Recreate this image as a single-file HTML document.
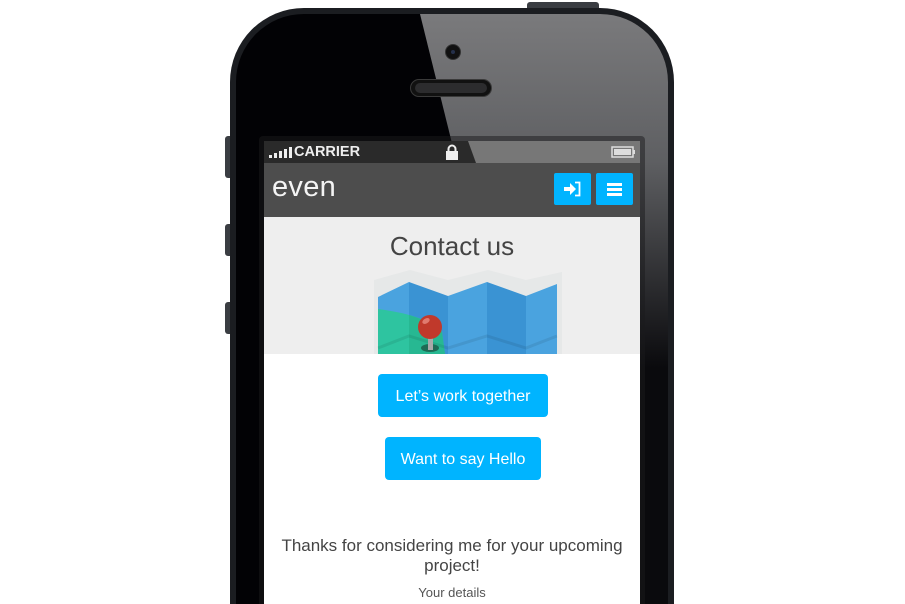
<!DOCTYPE html>
<html><head><meta charset="utf-8"><style>
html,body{margin:0;padding:0;width:905px;height:604px;overflow:hidden;background:#fff;font-family:"Liberation Sans",sans-serif}
#wrap{position:relative;width:905px;height:604px;overflow:hidden}
.abs{position:absolute}
</style></head><body><div id="wrap">
<div class="abs" style="left:225px;top:136px;width:8px;height:42px;background:#3a3d42;border-radius:3px 0 0 3px"></div>
<div class="abs" style="left:225px;top:224px;width:8px;height:32px;background:#3a3d42;border-radius:3px 0 0 3px"></div>
<div class="abs" style="left:225px;top:302px;width:8px;height:32px;background:#3a3d42;border-radius:3px 0 0 3px"></div>
<div class="abs" style="left:527px;top:2px;width:72px;height:10px;background:#3a3d42;border-radius:3px 3px 0 0"></div>
<div class="abs" style="left:230px;top:8px;width:444px;height:596px;background:#1b1d21;border-radius:74px 74px 0 0"></div>
<div class="abs" style="left:236px;top:14px;width:432px;height:590px;background:#020205;border-radius:68px 68px 0 0;overflow:hidden">
  <svg width="432" height="590" style="position:absolute;left:0;top:0">
    <defs><linearGradient id="g" x1="0" y1="0" x2="0" y2="1"><stop offset="0" stop-color="#7a7a7c"/><stop offset="0.25" stop-color="#5e5f62"/><stop offset="0.6" stop-color="#0a0a0d"/></linearGradient></defs>
    <polygon points="184,0 432,0 432,590 330,590" fill="url(#g)"/>
  </svg>
</div>
<div class="abs" style="left:445px;top:44px;width:16px;height:16px;border-radius:50%;background:#111;border:1px solid #333;box-sizing:border-box"></div>
<div class="abs" style="left:451px;top:50px;width:4px;height:4px;border-radius:50%;background:#25304a"></div>
<div class="abs" style="left:410px;top:79px;width:82px;height:18px;border-radius:9px;background:#111;border:1px solid #3a3a3a;box-sizing:border-box"></div>
<div class="abs" style="left:415px;top:83px;width:72px;height:10px;border-radius:5px;background:#2c2c2e"></div>
<div class="abs" style="left:259px;top:136px;width:386px;height:468px;background:#1a1a1c;border-radius:4px 4px 0 0;opacity:.5"></div>
<div class="abs" style="left:264px;top:141px;width:376px;height:22px;background:#2a2a2a;overflow:hidden">
  <div class="abs" style="left:204px;top:0;width:200px;height:22px;background:#777;transform:skewX(20deg);transform-origin:0 0"></div>
  <svg class="abs" style="left:4px;top:5px" width="26" height="12"><rect x="1" y="9" width="3" height="3" fill="#eee"/><rect x="6" y="7" width="3" height="5" fill="#eee"/><rect x="11" y="5" width="3" height="7" fill="#eee"/><rect x="16" y="3" width="3" height="9" fill="#eee"/><rect x="21" y="1" width="3" height="11" fill="#eee"/></svg>
  <div class="abs" style="left:30px;top:3px;color:#eee;font-weight:bold;font-size:14.5px">CARRIER</div>
  <svg class="abs" style="left:181px;top:3px" width="14" height="16"><path d="M3.5 7V5a3.5 3.5 0 0 1 7 0v2" fill="none" stroke="#eee" stroke-width="2"/><rect x="1" y="7" width="12" height="9" fill="#eee"/></svg>
  <svg class="abs" style="left:347px;top:5px" width="26" height="12"><rect x="1" y="1" width="21" height="10" fill="none" stroke="#ddd" stroke-width="1.5"/><rect x="3" y="3" width="17" height="6" fill="#ddd"/><rect x="22" y="4" width="2" height="4" fill="#ddd"/></svg>
</div>
<div class="abs" style="left:264px;top:163px;width:376px;height:54px;background:#4d4d4d">
  <div class="abs" style="left:8px;top:8px;color:#f4f4f4;font-size:29px;letter-spacing:0.3px">even</div>
  <div class="abs" style="left:290px;top:10px;width:37px;height:32px;background:#00b4ff;border-radius:2px"></div>
  <svg class="abs" style="left:299px;top:18px" width="20" height="16"><path d="M1 6h6V2l6 6-6 6v-4H1z" fill="#fff"/><path d="M12 1.5h4.5v13H12" fill="none" stroke="#fff" stroke-width="1.8"/></svg>
  <div class="abs" style="left:332px;top:10px;width:37px;height:32px;background:#00b4ff;border-radius:2px"></div>
  <div class="abs" style="left:343px;top:20px;width:15px;height:2.5px;background:#fff"></div>
  <div class="abs" style="left:343px;top:25px;width:15px;height:2.5px;background:#fff"></div>
  <div class="abs" style="left:343px;top:30px;width:15px;height:2.5px;background:#fff"></div>
</div>
<div class="abs" style="left:264px;top:217px;width:376px;height:137px;background:#eeeeee">
  <div class="abs" style="left:0;top:14px;width:376px;text-align:center;color:#444;font-size:26px">Contact us</div>
</div>
<svg class="abs" style="left:370px;top:270px" width="195" height="84">
  <polygon points="4,10 40,0 78,10 118,0 156,10 192,2 192,84 4,84" fill="#e6e8e8"/>
  <polygon points="8,27 39,12 39,84 8,84" fill="#4aa3df"/>
  <polygon points="39,12 78,26 78,84 39,84" fill="#3a93d3"/>
  <polygon points="78,26 117,12 117,84 78,84" fill="#4aa3df"/>
  <polygon points="117,12 156,26 156,84 117,84" fill="#3a93d3"/>
  <polygon points="156,26 187,14 187,84 156,84" fill="#4aa3df"/>
  <path d="M8,39 C30,42 60,48 72,62 L75,84 L8,84Z" fill="#2ec4a0"/>
  <path d="M39,45 C55,50 68,55 72,62 L75,84 L39,84Z" fill="#27b892"/>
  <polyline points="8,78 39,66 78,78 117,66 156,78 187,66" fill="none" stroke="#000" stroke-opacity=".08" stroke-width="3"/>
  <ellipse cx="60" cy="78" rx="9" ry="4" fill="#1e6b55"/>
  <rect x="58" y="60" width="5" height="20" fill="#a9a9a9"/>
  <circle cx="60" cy="57" r="12" fill="#c0392b"/>
  <ellipse cx="56" cy="51" rx="4" ry="2.5" fill="#e07a6f" transform="rotate(-30 56 51)"/>
</svg>
<div class="abs" style="left:264px;top:354px;width:376px;height:250px;background:#fff"></div>
<div class="abs" style="left:378px;top:374px;width:170px;height:43px;background:#00b4ff;border-radius:4px;color:#fff;font-size:16px;line-height:45px;text-align:center">Let’s work together</div>
<div class="abs" style="left:385px;top:437px;width:156px;height:43px;background:#00b4ff;border-radius:4px;color:#fff;font-size:16px;line-height:45px;text-align:center">Want to say Hello</div>
<div class="abs" style="left:264px;top:536px;width:376px;text-align:center;color:#444;font-size:17px;line-height:20px">Thanks for considering me for your upcoming<br>project!</div>
<div class="abs" style="left:264px;top:585px;width:376px;text-align:center;color:#555;font-size:13px;line-height:16px">Your details</div>
</div></body></html>
